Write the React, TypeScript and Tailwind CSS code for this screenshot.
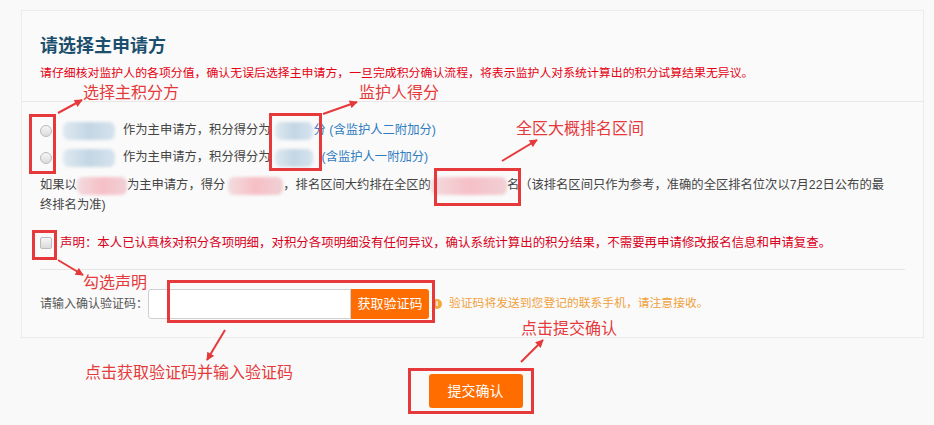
import React from "react";

const font = { fontFamily: '"Liberation Sans", "Noto Sans CJK SC", sans-serif' };

// blurred placeholder for hidden personal data
function Blob({ w, tone = "blue" }: { w: number; tone?: "blue" | "pink" }) {
  const cls =
    tone === "blue"
      ? "bg-gradient-to-r from-[#dfe9f0] via-[#c3d6e4] to-[#d6e3ee]"
      : "bg-gradient-to-r from-[#f1dcdf] via-[#f6bfc6] to-[#f0d0d5]";
  return (
    <span
      className={`inline-block h-[18px] align-middle rounded-[6px] blur-[1.5px] ${cls}`}
      style={{ width: w }}
    />
  );
}

function Radio() {
  return (
    <span className="inline-block w-[12px] h-[12px] rounded-full border border-[#bcbcbc] bg-gradient-to-b from-[#f6f6f6] to-[#dcdcdc] shrink-0" />
  );
}

// red annotation box
function Mark({ l, t, w, h }: { l: number; t: number; w: number; h: number }) {
  return (
    <div
      className="absolute border-[3px] border-[#e5393b] pointer-events-none"
      style={{ left: l, top: t, width: w, height: h }}
    />
  );
}

function Note({ l, t, text }: { l: number; t: number; text: string }) {
  return (
    <div
      className="absolute text-[16px] leading-[16px] text-[#e5393b] whitespace-nowrap"
      style={{ left: l, top: t }}
    >
      {text}
    </div>
  );
}

const arrows = [
  [58, 113, 82, 100],
  [323, 114, 357, 102],
  [502, 161, 537, 140],
  [58, 260, 83, 275],
  [225, 330, 207, 360],
  [521, 362, 543, 340],
];

export default function App() {
  return (
    <div className="relative w-[934px] h-[425px] overflow-hidden bg-[#f9f9f9] text-[#444]" style={font}>
      <div className="pt-[10px]">
        {/* panel */}
        <div className="ml-[21px] w-[903px] border border-[#ececec] bg-[#fafafa]">
          <div className="pt-[24px] px-[18px] pb-[19px] border-b border-[#e8e8e8]">
            <h2 className="text-[18px] leading-[22px] font-bold text-[#1c4f6e]">请选择主申请方</h2>
            <p className="mt-[7px] text-[11.9px] leading-[18px] text-[#e60012]">
              请仔细核对监护人的各项分值，确认无误后选择主申请方，一旦完成积分确认流程，将表示监护人对系统计算出的积分试算结果无异议。
            </p>
          </div>

          <div className="px-[18px] pt-[15px]">
            <div className="flex items-center h-[27px] text-[12.3px]">
              <Radio />
              <span className="ml-[11px]"><Blob w={52} /></span>
              <span className="ml-[8px]">作为主申请方，积分得分为</span>
              <span className="ml-[4px]"><Blob w={38} /></span>
              <span className="ml-[1px] text-[#2f7cc0]">分 (含监护人二附加分)</span>
            </div>
            <div className="flex items-center h-[27px] text-[12.3px]">
              <Radio />
              <span className="ml-[11px]"><Blob w={52} /></span>
              <span className="ml-[8px]">作为主申请方，积分得分为</span>
              <span className="ml-[4px]"><Blob w={38} /></span>
              <span className="ml-[9px] text-[#2f7cc0]">(含监护人一附加分)</span>
            </div>

            <p className="mt-[4px] text-[12.3px] leading-[20px]">
              如果以<Blob w={50} tone="pink" />为主申请方，得分<span className="ml-[3px]"><Blob w={55} tone="pink" /></span>，排名区间大约排在全区的<Blob w={76} tone="pink" />名（该排名区间只作为参考，准确的全区排名位次以7月22日公布的最
              <br />
              终排名为准)
            </p>

            <div className="mt-[18px] pb-[17px] border-b border-[#e6e6e6] flex items-center h-[37px]">
              <span className="inline-block w-[12px] h-[12px] rounded-[2px] border border-[#bcbcbc] bg-gradient-to-b from-[#f6f6f6] to-[#dcdcdc] shrink-0" />
              <span className="ml-[8px] text-[12.45px] leading-[20px] text-[#d9001b]">
                声明：本人已认真核对积分各项明细，对积分各项明细没有任何异议，确认系统计算出的积分结果，不需要再申请修改报名信息和申请复查。
              </span>
            </div>

            <div className="mt-[19px] pb-[18px] flex items-center">
              <span className="w-[108px] text-[12px] text-[#555]">请输入确认验证码：</span>
              <div className="flex h-[30px]">
                <input className="w-[203px] h-[30px] border border-[#cfcfcf] rounded-l-[3px] bg-white outline-none" />
                <button className="w-[78px] h-[30px] rounded-r-[3px] bg-[#ff6c00] text-white text-[13px]">
                  获取验证码
                </button>
              </div>
              <span className="ml-[3px] w-[10px] h-[10px] rounded-full bg-[#f4a640] text-white text-[8px] leading-[10px] text-center font-bold">
                i
              </span>
              <span className="ml-[7px] text-[11.8px] text-[#f0a13c]">
                验证码将发送到您登记的联系手机，请注意接收。
              </span>
            </div>
          </div>
        </div>

        <div className="ml-[21px] w-[903px] flex justify-center mt-[36px]">
          <button className="ml-[6px] w-[94px] h-[34px] rounded-[3px] bg-[#ff6c00] text-white text-[14px]">
            提交确认
          </button>
        </div>
      </div>

      {/* annotations */}
      <Mark l={29} t={114} w={27} h={60} />
      <Mark l={269} t={113} w={53} h={58} />
      <Mark l={434} t={168} w={87} h={38} />
      <Mark l={32} t={230} w={25} h={30} />
      <Mark l={167} t={280} w={268} h={43} />
      <Mark l={408} t={368} w={126} h={46} />

      <Note l={83} t={85} text="选择主积分方" />
      <Note l={359} t={85} text="监护人得分" />
      <Note l={516} t={121} text="全区大概排名区间" />
      <Note l={83} t={275} text="勾选声明" />
      <Note l={85} t={365} text="点击获取验证码并输入验证码" />
      <Note l={521} t={321} text="点击提交确认" />

      <svg className="absolute inset-0 pointer-events-none" width={934} height={425}>
        <defs>
          <marker id="ah" viewBox="0 0 10 10" refX="9" refY="5" markerWidth="5" markerHeight="4" orient="auto">
            <path d="M0 0 L10 5 L0 10 z" fill="#e5393b" />
          </marker>
        </defs>
        {arrows.map(([x1, y1, x2, y2], i) => (
          <line key={i} x1={x1} y1={y1} x2={x2} y2={y2} stroke="#e5393b" strokeWidth={2} markerEnd="url(#ah)" />
        ))}
      </svg>
    </div>
  );
}
